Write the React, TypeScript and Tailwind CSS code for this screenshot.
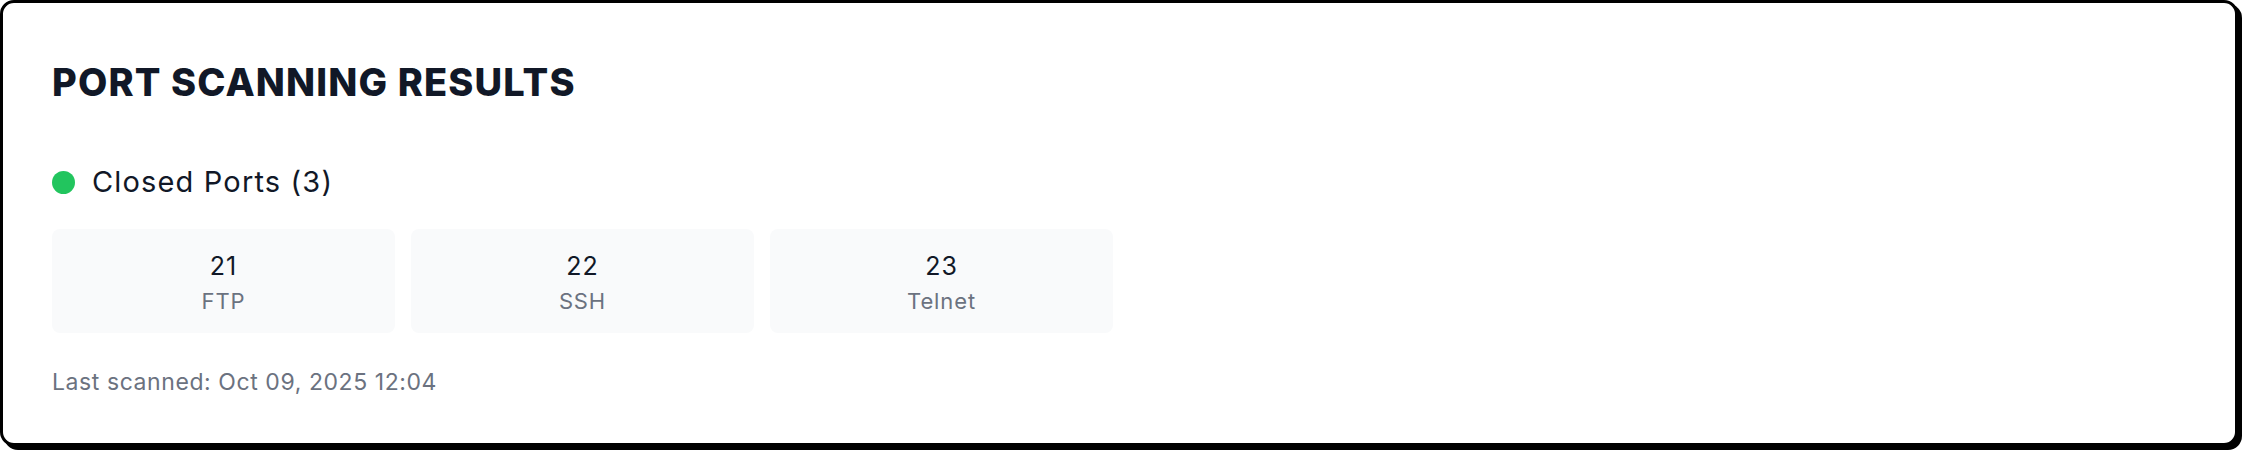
const ports = [
  { port: "21", service: "FTP" },
  { port: "22", service: "SSH" },
  { port: "23", service: "Telnet" },
];

export default function App() {
  return (
    <div className="bg-white pb-1 pr-1" style={{ fontFamily: "Inter, 'Noto Sans', sans-serif" }}>
      <section className="h-[446px] w-[2238px] rounded-[14px] border-[3px] border-black bg-white px-[49px] pt-[56px] shadow-[4px_4px_0_0_#000]">
        <h1 className="text-[38px] font-extrabold leading-[46px] tracking-[0.03em] text-[#111827]">
          PORT SCANNING RESULTS
        </h1>

        <div className="mt-[61px] flex items-center gap-[17px]">
          <span className="h-[23px] w-[23px] rounded-full bg-[#22c55e]" />
          <span className="text-[29px] leading-[32px] tracking-[0.04em] text-[#111827]">
            Closed Ports (3)
          </span>
        </div>

        <div className="mt-[31px] flex gap-4">
          {ports.map((p) => (
            <div
              key={p.port}
              className="flex h-[104px] w-[343px] flex-col items-center rounded-lg bg-[#f9fafb] pt-[22px]"
            >
              <span className="text-[25px] leading-[30px] tracking-[0.04em] text-[#111827]">{p.port}</span>
              <span className="mt-[6px] text-[22px] leading-[28px] tracking-[0.04em] text-[#6b7280]">
                {p.service}
              </span>
            </div>
          ))}
        </div>

        <p className="mt-[35px] text-[23px] leading-[28px] tracking-[0.025em] text-[#6b7280]">
          Last scanned: Oct 09, 2025 12:04
        </p>
      </section>
    </div>
  );
}
